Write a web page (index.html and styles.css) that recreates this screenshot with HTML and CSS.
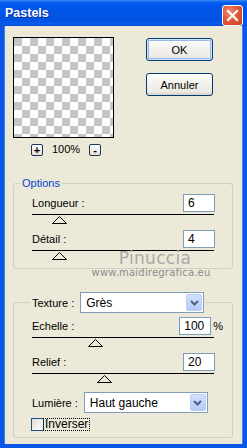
FILE: index.html
```html
<!DOCTYPE html>
<html lang="fr">
<head>
<meta charset="utf-8">
<title>Pastels</title>
<link rel="stylesheet" href="styles.css">
</head>
<body>
<div class="window">
  <div class="titlebar">
    <span class="title">Pastels</span>
    <span class="close">
      <svg width="13" height="13" viewBox="0 0 13 13"><path d="M2 2 L11 11 M11 2 L2 11" stroke="#fff" stroke-width="2.2" stroke-linecap="square"/></svg>
    </span>
  </div>
  <div class="client">
    <div class="top">
      <div class="preview-col">
        <div class="preview"></div>
        <div class="zoom">
          <span class="zbtn">+</span>
          <span class="zval">100%</span>
          <span class="zbtn">-</span>
        </div>
      </div>
      <div class="buttons">
        <button class="btn btn-default">OK</button>
        <button class="btn">Annuler</button>
      </div>
    </div>

    <fieldset class="group options">
      <legend class="legend-title">Options</legend>
      <div class="field">
        <div class="row"><span class="lbl">Longueur :</span><span class="num">6</span></div>
        <div class="track"><svg class="thumb" style="left:20px" width="15" height="8" viewBox="0 0 15 8"><polygon points="0.5,7.5 7.5,0.5 14.5,7.5" fill="#ece9d8" stroke="#000"/></svg></div>
      </div>
      <div class="field">
        <div class="row"><span class="lbl">Détail :</span><span class="num">4</span></div>
        <div class="track"><svg class="thumb" style="left:20px" width="15" height="8" viewBox="0 0 15 8"><polygon points="0.5,7.5 7.5,0.5 14.5,7.5" fill="#ece9d8" stroke="#000"/></svg></div>
      </div>
    </fieldset>

    <div class="watermark">
      <span class="wm-name">Pinuccia</span>
      <span class="wm-url">www.maidiregrafica.eu</span>
    </div>

    <fieldset class="group texture">
      <legend class="legend-combo">
        <span class="lbl">Texture :</span>
        <span class="select"><span class="sel-text">Grès</span><span class="sel-arrow"><svg width="9" height="6" viewBox="0 0 9 6"><path d="M1 1 L4.5 4.5 L8 1" fill="none" stroke="#4d6185" stroke-width="2"/></svg></span></span>
      </legend>
      <div class="field">
        <div class="row"><span class="lbl">Echelle :</span><span class="num-wrap"><span class="num">100</span><span class="unit">%</span></span></div>
        <div class="track"><svg class="thumb" style="left:56px" width="15" height="8" viewBox="0 0 15 8"><polygon points="0.5,7.5 7.5,0.5 14.5,7.5" fill="#ece9d8" stroke="#000"/></svg></div>
      </div>
      <div class="field">
        <div class="row"><span class="lbl">Relief :</span><span class="num">20</span></div>
        <div class="track"><svg class="thumb" style="left:65px" width="15" height="8" viewBox="0 0 15 8"><polygon points="0.5,7.5 7.5,0.5 14.5,7.5" fill="#ece9d8" stroke="#000"/></svg></div>
      </div>
      <div class="combo-row">
        <span class="lbl">Lumière :</span>
        <span class="select"><span class="sel-text">Haut gauche</span><span class="sel-arrow"><svg width="9" height="6" viewBox="0 0 9 6"><path d="M1 1 L4.5 4.5 L8 1" fill="none" stroke="#4d6185" stroke-width="2"/></svg></span></span>
      </div>
      <div class="check-row">
        <span class="checkbox"></span>
        <span class="check-label">Inverser</span>
      </div>
    </fieldset>
  </div>
</div>
</body>
</html>
```

FILE: styles.css
```css
* { box-sizing: border-box; }
html, body { margin: 0; padding: 0; }
body {
  width: 247px;
  height: 448px;
  overflow: hidden;
  font-family: "Liberation Sans", Arial, sans-serif;
  font-size: 11px;
  color: #000;
  background: #ece9d8;
}
.window {
  display: flex;
  flex-direction: column;
  height: 448px;
}
.titlebar {
  flex: none;
  height: 26px;
  display: flex;
  align-items: flex-start;
  justify-content: space-between;
  padding: 0 4px 0 5px;
  background: linear-gradient(to bottom, #3c8df7 0, #0b63ea 2px, #0059ee 4px, #0055e7 45%, #0053e2 80%, #0a5ded 92%, #0048cc 100%);
}
.title {
  margin-top: 6px;
  color: #fff;
  font-weight: bold;
  font-size: 12.5px;
  line-height: 14px;
  text-shadow: 1px 1px 0 #0c2a9e;
}
.close {
  margin-top: 5px;
  width: 21px;
  height: 21px;
  border: 1px solid #fff;
  border-radius: 3px;
  background: radial-gradient(circle at 35% 30%, #f08a6e 0, #e2593a 45%, #c8401f 100%);
  display: flex;
  align-items: center;
  justify-content: center;
}
.client {
  flex: 1;
  position: relative;
  border-style: solid;
  border-width: 0 4px 4px 4px;
  border-color: #0a57e6;
  box-shadow: inset 1px 0 0 #3d83f0, inset -1px 0 0 #3d83f0;
  padding: 11px 10px 0 9px;
  display: flex;
  flex-direction: column;
}
.top {
  display: flex;
  align-items: flex-start;
}
.preview-col {
  width: 101px;
  display: flex;
  flex-direction: column;
}
.preview {
  width: 101px;
  height: 101px;
  border: 1px solid #000;
  background-color: #fff;
  background-image: conic-gradient(#fff 25%, #c4c4c4 0 50%, #fff 0 75%, #c4c4c4 0);
  background-size: 16px 16px;
}
.zoom {
  margin-top: 6px;
  display: flex;
  align-items: center;
  padding-left: 18px;
  height: 12px;
}
.zbtn {
  width: 12px;
  height: 12px;
  border: 1px solid #1d3557;
  border-radius: 2px;
  background: linear-gradient(#fff, #e3e0d3);
  display: flex;
  align-items: center;
  justify-content: center;
  font-size: 11px;
  line-height: 10px;
  font-weight: bold;
}
.zval {
  margin: -2px 9px 0 9px;
  line-height: 12px;
}
.buttons {
  margin-left: 32px;
  margin-top: 1px;
  display: flex;
  flex-direction: column;
  gap: 12px;
}
.btn {
  width: 67px;
  height: 23px;
  padding: 0;
  font: 11px "Liberation Sans", Arial, sans-serif;
  color: #000;
  border: 1px solid #003c74;
  border-radius: 3px;
  background: linear-gradient(#ffffff 0, #f3f2ee 40%, #ecebe4 85%, #d6d0c5 100%);
}
.btn-default {
  box-shadow: inset 0 0 0 1px #cee7ff, inset 0 0 0 2px #98b8ea;
}
.group {
  margin: 21px 0 0 0;
  width: 220px;
  min-width: 0;
  padding: 4px 18px 0 18px;
  border: 1px solid #d0d0bf;
  border-radius: 3px;
}
.legend-title {
  color: #0046d5;
  padding: 0 2px;
  margin-left: -12px;
  line-height: 13px;
}
.field .row {
  height: 18px;
  display: flex;
  align-items: center;
  justify-content: space-between;
}
.num {
  width: 32px;
  height: 18px;
  margin-right: -1px;
  border: 1px solid #7f9db9;
  background: #fff;
  padding-left: 4px;
  font-size: 12px;
  line-height: 16px;
}
.num-wrap {
  display: flex;
  align-items: center;
  margin-right: -1px;
}
.num-wrap .num { margin-right: 0; }
.unit {
  margin-left: 2px;
  margin-right: -8px;
}
.track {
  position: relative;
  margin-top: 2px;
  height: 16px;
  border-top: 1px solid #000;
}
.thumb {
  position: absolute;
  top: 1px;
  display: block;
}
.options { height: 92px; }
.watermark {
  position: absolute;
  left: 85px;
  top: 224px;
  width: 124px;
  display: flex;
  flex-direction: column;
  align-items: center;
  pointer-events: none;
}
.wm-name {
  font-family: "DejaVu Sans", sans-serif;
  font-size: 17px;
  line-height: 16px;
  color: #a9a9a9;
  letter-spacing: 0.3px;
  margin-left: 8px;
}
.wm-url {
  margin-top: 1px;
  font-family: "DejaVu Sans", sans-serif;
  font-size: 10px;
  line-height: 11px;
  color: #8c8c8c;
  letter-spacing: 0.2px;
}
.texture {
  margin-top: 23px;
  padding-top: 4px;
  height: 146px;
}
.legend-combo {
  display: flex;
  align-items: center;
  padding: 0 1px 0 2px;
  margin-left: -2px;
}
.select {
  margin-left: 6px;
  width: 124px;
  height: 21px;
  border: 1px solid #7f9db9;
  background: #fff;
  display: flex;
  align-items: center;
  justify-content: space-between;
  padding: 1px;
}
.sel-text {
  padding-left: 4px;
  font-size: 12px;
}
.sel-arrow {
  width: 16px;
  height: 17px;
  border: 1px solid #b9cdf7;
  border-radius: 2px;
  background: linear-gradient(#d3e0fd, #b5cbf9);
  display: flex;
  align-items: center;
  justify-content: center;
}
.combo-row {
  margin-top: 3px;
  display: flex;
  align-items: center;
}
.check-row {
  margin-top: 5px;
  display: flex;
  align-items: center;
  margin-left: -1px;
}
.checkbox {
  width: 13px;
  height: 13px;
  border: 1px solid #1c5180;
  background: linear-gradient(135deg, #dcdcd7, #fff);
}
.check-label {
  padding: 0 1px;
  line-height: 11px;
  outline: 1px dotted #000;
  outline-offset: 0;
  font-size: 12px;
}
```
